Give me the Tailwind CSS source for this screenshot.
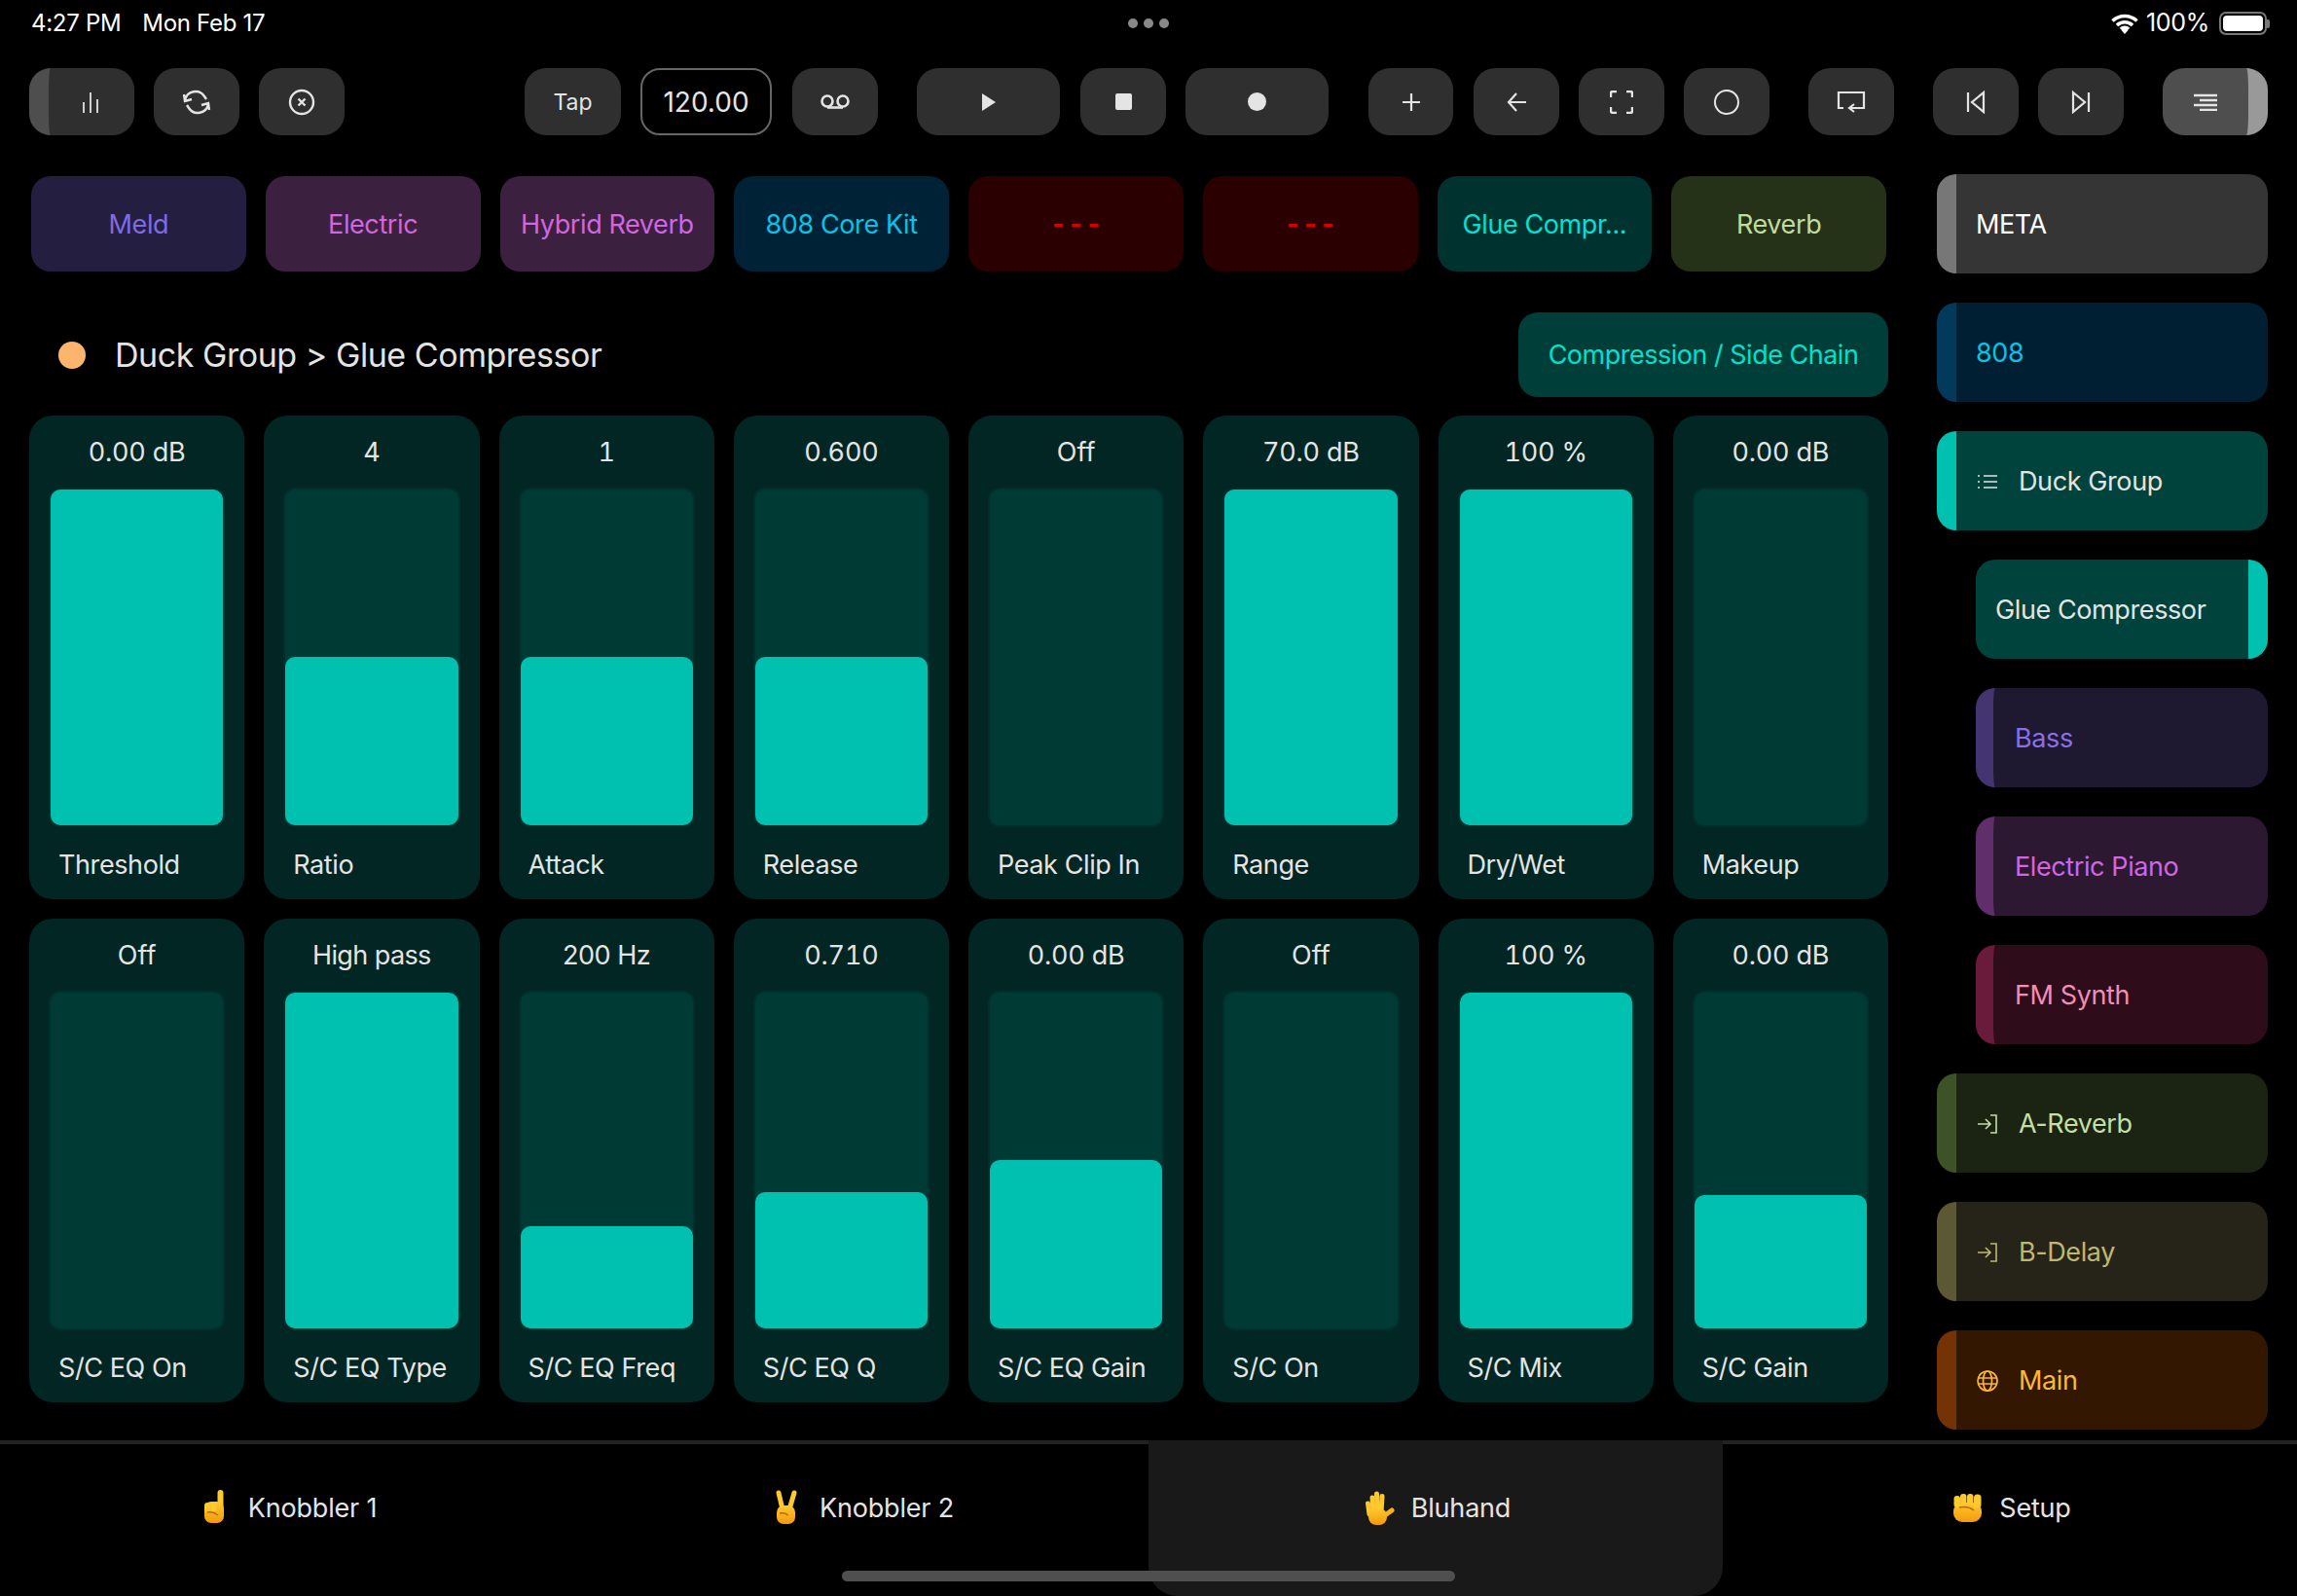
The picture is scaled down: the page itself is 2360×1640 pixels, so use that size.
<!DOCTYPE html>
<html lang="en">
<head>
    <meta charset="UTF-8">
    <title>Bluhand</title>
    <script src="https://cdn.jsdelivr.net/npm/@tailwindcss/browser@4"></script>
</head>
<body class="bg-black w-[2360px] h-[1640px] overflow-hidden relative font-['Inter',sans-serif] text-[#e4e4e4]">

    <!-- status bar -->
    <div class="h-[48px] flex items-center justify-between pl-[32px] pr-[28px] text-white text-[24px] tracking-[-0.3px]">
        <div class="flex gap-[22px]"><span>4:27 PM</span><span>Mon Feb 17</span></div>
        <div class="flex items-center gap-[8px]">
            <svg width="28" height="21" viewBox="0 0 28 21" fill="none" stroke="white" stroke-width="3.6"><path d="M1.5 7.5a18 18 0 0 1 25 0M6 12a11.5 11.5 0 0 1 16 0M10 16a5.5 5.5 0 0 1 8 0"/><path d="M14 21l-3.5-4a5 5 0 0 1 7 0z" fill="white" stroke="none"/></svg>
            <span class="text-[25px]">100%</span>
            <div class="ml-[2px] flex items-center">
                <div class="w-[49px] h-[24px] rounded-[7px] border-2 border-[#777] p-[2px]"><div class="w-full h-full bg-white rounded-[4px]"></div></div>
                <div class="w-[3px] h-[9px] rounded-r-[2px] bg-[#777]"></div>
            </div>
        </div>
    </div>
    <div class="absolute left-[1159px] top-[19px] flex gap-[6px]">
        <div class="w-[10px] h-[10px] rounded-full bg-[#888]"></div>
        <div class="w-[10px] h-[10px] rounded-full bg-[#888]"></div>
        <div class="w-[10px] h-[10px] rounded-full bg-[#888]"></div>
    </div>

    <!-- toolbar -->
    <div class="mt-[22px] h-[69px] pl-[30px] flex text-[#e4e4e4]">
        <div class="w-[108px] bg-[#2f2f2f] rounded-[22px] overflow-hidden flex items-center border-l-[20px] border-[#4e4e4e]">
            <svg class="ml-[33px]" width="20" height="24" viewBox="0 0 20 24" stroke="#e4e4e4" stroke-width="1.8"><path d="M3 12v11M10 2v21M17 9v14"/></svg>
        </div>
        <div class="ml-[20px] w-[88px] bg-[#2f2f2f] rounded-[22px] flex items-center justify-center">
            <svg width="30" height="28" viewBox="0 0 30 28" fill="none" stroke="#e4e4e4" stroke-width="2.4"><path d="M3 12a11 11 0 0 1 20-4l2 3M27 16a11 11 0 0 1-20 4l-2-3M2 6l1 7 7-2M28 22l-1-7-7 2"/></svg>
        </div>
        <div class="ml-[20px] w-[88px] bg-[#2f2f2f] rounded-[22px] flex items-center justify-center">
            <svg width="28" height="28" viewBox="0 0 28 28" fill="none" stroke="#e4e4e4" stroke-width="2.4"><circle cx="14" cy="14" r="12"/><path d="M10.5 10.5l7 7M17.5 10.5l-7 7"/></svg>
        </div>
        <div class="ml-[185px] w-[99px] bg-[#2f2f2f] rounded-[22px] flex items-center justify-center text-[23px] pt-[1px]">Tap</div>
        <div class="ml-[20px] w-[135px] bg-black rounded-[20px] border-2 border-[#666] flex items-center justify-center text-[28px]">120.00</div>
        <div class="ml-[21px] w-[88px] bg-[#2f2f2f] rounded-[22px] flex items-center justify-center">
            <svg width="30" height="16" viewBox="0 0 30 16" fill="none" stroke="#e4e4e4" stroke-width="2.6"><circle cx="7" cy="7" r="5.5"/><circle cx="23" cy="7" r="5.5"/><path d="M7 13.5h16"/></svg>
        </div>
        <div class="ml-[40px] w-[147px] bg-[#2f2f2f] rounded-[22px] flex items-center justify-center">
            <svg width="14" height="18" viewBox="0 0 14 18" fill="#e4e4e4"><path d="M0 0l14 9L0 18z"/></svg>
        </div>
        <div class="ml-[21px] w-[88px] bg-[#2f2f2f] rounded-[22px] flex items-center justify-center">
            <div class="w-[17px] h-[17px] bg-[#e4e4e4] rounded-[2px]"></div>
        </div>
        <div class="ml-[20px] w-[147px] bg-[#2f2f2f] rounded-[22px] flex items-center justify-center">
            <div class="w-[19px] h-[19px] bg-[#e4e4e4] rounded-full"></div>
        </div>
        <div class="ml-[41px] w-[87px] bg-[#2f2f2f] rounded-[22px] flex items-center justify-center">
            <svg width="20" height="20" viewBox="0 0 20 20" stroke="#e4e4e4" stroke-width="2.2"><path d="M10 1v18M1 10h18"/></svg>
        </div>
        <div class="ml-[21px] w-[88px] bg-[#2f2f2f] rounded-[22px] flex items-center justify-center">
            <svg width="20" height="20" viewBox="0 0 20 20" fill="none" stroke="#e4e4e4" stroke-width="2.2"><path d="M10 1l-8 9 8 9M2 10h18"/></svg>
        </div>
        <div class="ml-[20px] w-[88px] bg-[#2f2f2f] rounded-[22px] flex items-center justify-center">
            <svg width="24" height="24" viewBox="0 0 24 24" fill="none" stroke="#e4e4e4" stroke-width="2.4"><path d="M1 7V3a2 2 0 0 1 2-2h4M17 1h4a2 2 0 0 1 2 2v4M23 17v4a2 2 0 0 1-2 2h-4M7 23H3a2 2 0 0 1-2-2v-4"/></svg>
        </div>
        <div class="ml-[20px] w-[88px] bg-[#2f2f2f] rounded-[22px] flex items-center justify-center">
            <div class="w-[26px] h-[26px] rounded-full border-[2.4px] border-[#e4e4e4]"></div>
        </div>
        <div class="ml-[40px] w-[88px] bg-[#2f2f2f] rounded-[22px] flex items-center justify-center">
            <svg width="30" height="24" viewBox="0 0 30 24" fill="none" stroke="#e4e4e4" stroke-width="2.2"><path d="M7 18H2V2h26v16H14M18 14l-5 4 5 4M13 18h7"/></svg>
        </div>
        <div class="ml-[40px] w-[88px] bg-[#2f2f2f] rounded-[22px] flex items-center justify-center">
            <svg width="20" height="24" viewBox="0 0 20 24" fill="none" stroke="#e4e4e4" stroke-width="2.2"><path d="M2 2v20M18 2L6 12l12 10z"/></svg>
        </div>
        <div class="ml-[20px] w-[88px] bg-[#2f2f2f] rounded-[22px] flex items-center justify-center">
            <svg width="20" height="24" viewBox="0 0 20 24" fill="none" stroke="#e4e4e4" stroke-width="2.2"><path d="M18 2v20M2 2l12 10L2 22z"/></svg>
        </div>
        <div class="ml-[40px] w-[108px] bg-[#4e4e4e] rounded-[22px] overflow-hidden flex items-center border-r-[20px] border-[#999]">
            <svg class="ml-[32px]" width="24" height="18" viewBox="0 0 24 18" stroke="#e4e4e4" stroke-width="2.4"><path d="M0 2h24M6 7h18M0 12h24M6 17h18"/></svg>
        </div>
    </div>

    <div class="flex mt-[40px] pl-[30px]">
        <!-- main panel -->
        <div class="w-[1910px]">
            <div class="grid grid-cols-8 gap-x-[20px] mt-[2px] px-[2px] text-[27px] tracking-[-0.4px]">
                <div class="h-[98px] pt-[2px] rounded-[20px] bg-[#241f40] text-[#7f6be6] flex items-center justify-center">Meld</div>
                <div class="h-[98px] pt-[2px] rounded-[20px] bg-[#3c203f] text-[#d265e0] flex items-center justify-center">Electric</div>
                <div class="h-[98px] pt-[2px] rounded-[20px] bg-[#3c203f] text-[#d265e0] flex items-center justify-center">Hybrid Reverb</div>
                <div class="h-[98px] pt-[2px] rounded-[20px] bg-[#002236] text-[#08c3e6] flex items-center justify-center">808 Core Kit</div>
                <div class="h-[98px] pt-[2px] rounded-[20px] bg-[#2a0000] text-[#d40000] font-bold flex items-center justify-center">- - -</div>
                <div class="h-[98px] pt-[2px] rounded-[20px] bg-[#2a0000] text-[#d40000] font-bold flex items-center justify-center">- - -</div>
                <div class="h-[98px] pt-[2px] rounded-[20px] bg-[#003230] text-[#00e0d4] flex items-center justify-center">Glue Compr...</div>
                <div class="h-[98px] pt-[2px] rounded-[20px] bg-[#263217] text-[#c0dc9c] flex items-center justify-center">Reverb</div>
            </div>

            <div class="mt-[42px] h-[87px] flex items-center justify-between">
                <div class="flex items-center pl-[30px] gap-[30px] text-[34px] tracking-[-0.45px]">
                    <div class="w-[28px] h-[28px] rounded-full bg-[#fdb56e]"></div>
                    <span>Duck Group &gt; Glue Compressor</span>
                </div>
                <div class="w-[380px] h-[87px] pt-[2px] rounded-[20px] bg-[#003e39] text-[#00e0cd] flex items-center justify-center text-[27px] tracking-[-0.5px]">Compression / Side Chain</div>
            </div>

            <!-- parameter sliders -->
            <div class="grid grid-cols-8 gap-[20px] mt-[19px] text-[27px]">
                <div class="h-[497px] rounded-[24px] bg-[#012623] px-[20px] flex flex-col">
                    <div class="h-[74px] pt-[2px] flex items-center justify-center tabular-nums tracking-[-0.2px]">0.00 dB</div>
                    <div class="h-[349px] rounded-[12px] border-2 border-[#012f2b] bg-[#003a35] flex flex-col justify-end"><div class="h-full rounded-[10px] bg-[#00c1b0]"></div></div>
                    <div class="flex-1 flex items-center pl-[10px] pt-[5px] tracking-[-0.4px]">Threshold</div>
                </div>
                <div class="h-[497px] rounded-[24px] bg-[#012623] px-[20px] flex flex-col">
                    <div class="h-[74px] pt-[2px] flex items-center justify-center tabular-nums tracking-[-0.2px]">4</div>
                    <div class="h-[349px] rounded-[12px] border-2 border-[#012f2b] bg-[#003a35] flex flex-col justify-end"><div class="h-[173px] rounded-[10px] bg-[#00c1b0]"></div></div>
                    <div class="flex-1 flex items-center pl-[10px] pt-[5px] tracking-[-0.4px]">Ratio</div>
                </div>
                <div class="h-[497px] rounded-[24px] bg-[#012623] px-[20px] flex flex-col">
                    <div class="h-[74px] pt-[2px] flex items-center justify-center tabular-nums tracking-[-0.2px]">1</div>
                    <div class="h-[349px] rounded-[12px] border-2 border-[#012f2b] bg-[#003a35] flex flex-col justify-end"><div class="h-[173px] rounded-[10px] bg-[#00c1b0]"></div></div>
                    <div class="flex-1 flex items-center pl-[10px] pt-[5px] tracking-[-0.4px]">Attack</div>
                </div>
                <div class="h-[497px] rounded-[24px] bg-[#012623] px-[20px] flex flex-col">
                    <div class="h-[74px] pt-[2px] flex items-center justify-center tabular-nums tracking-[-0.2px]">0.600</div>
                    <div class="h-[349px] rounded-[12px] border-2 border-[#012f2b] bg-[#003a35] flex flex-col justify-end"><div class="h-[173px] rounded-[10px] bg-[#00c1b0]"></div></div>
                    <div class="flex-1 flex items-center pl-[10px] pt-[5px] tracking-[-0.4px]">Release</div>
                </div>
                <div class="h-[497px] rounded-[24px] bg-[#012623] px-[20px] flex flex-col">
                    <div class="h-[74px] pt-[2px] flex items-center justify-center">Off</div>
                    <div class="h-[349px] rounded-[12px] border-2 border-[#012f2b] bg-[#003a35]"></div>
                    <div class="flex-1 flex items-center pl-[10px] pt-[5px] tracking-[-0.4px]">Peak Clip In</div>
                </div>
                <div class="h-[497px] rounded-[24px] bg-[#012623] px-[20px] flex flex-col">
                    <div class="h-[74px] pt-[2px] flex items-center justify-center tabular-nums tracking-[-0.2px]">70.0 dB</div>
                    <div class="h-[349px] rounded-[12px] border-2 border-[#012f2b] bg-[#003a35] flex flex-col justify-end"><div class="h-full rounded-[10px] bg-[#00c1b0]"></div></div>
                    <div class="flex-1 flex items-center pl-[10px] pt-[5px] tracking-[-0.4px]">Range</div>
                </div>
                <div class="h-[497px] rounded-[24px] bg-[#012623] px-[20px] flex flex-col">
                    <div class="h-[74px] pt-[2px] flex items-center justify-center tabular-nums tracking-[-0.2px]">100 %</div>
                    <div class="h-[349px] rounded-[12px] border-2 border-[#012f2b] bg-[#003a35] flex flex-col justify-end"><div class="h-full rounded-[10px] bg-[#00c1b0]"></div></div>
                    <div class="flex-1 flex items-center pl-[10px] pt-[5px] tracking-[-0.4px]">Dry/Wet</div>
                </div>
                <div class="h-[497px] rounded-[24px] bg-[#012623] px-[20px] flex flex-col">
                    <div class="h-[74px] pt-[2px] flex items-center justify-center tabular-nums tracking-[-0.2px]">0.00 dB</div>
                    <div class="h-[349px] rounded-[12px] border-2 border-[#012f2b] bg-[#003a35]"></div>
                    <div class="flex-1 flex items-center pl-[10px] pt-[5px] tracking-[-0.4px]">Makeup</div>
                </div>

                <div class="h-[497px] rounded-[24px] bg-[#012623] px-[20px] flex flex-col">
                    <div class="h-[74px] pt-[2px] flex items-center justify-center">Off</div>
                    <div class="h-[349px] rounded-[12px] border-2 border-[#012f2b] bg-[#003a35]"></div>
                    <div class="flex-1 flex items-center pl-[10px] pt-[5px] tracking-[-0.4px]">S/C EQ On</div>
                </div>
                <div class="h-[497px] rounded-[24px] bg-[#012623] px-[20px] flex flex-col">
                    <div class="h-[74px] pt-[2px] flex items-center justify-center tracking-[-0.6px]">High pass</div>
                    <div class="h-[349px] rounded-[12px] border-2 border-[#012f2b] bg-[#003a35] flex flex-col justify-end"><div class="h-full rounded-[10px] bg-[#00c1b0]"></div></div>
                    <div class="flex-1 flex items-center pl-[10px] pt-[5px] tracking-[-0.4px]">S/C EQ Type</div>
                </div>
                <div class="h-[497px] rounded-[24px] bg-[#012623] px-[20px] flex flex-col">
                    <div class="h-[74px] pt-[2px] flex items-center justify-center tracking-[-0.5px]">200 Hz</div>
                    <div class="h-[349px] rounded-[12px] border-2 border-[#012f2b] bg-[#003a35] flex flex-col justify-end"><div class="h-[105px] rounded-[10px] bg-[#00c1b0]"></div></div>
                    <div class="flex-1 flex items-center pl-[10px] pt-[5px] tracking-[-0.4px]">S/C EQ Freq</div>
                </div>
                <div class="h-[497px] rounded-[24px] bg-[#012623] px-[20px] flex flex-col">
                    <div class="h-[74px] pt-[2px] flex items-center justify-center tabular-nums tracking-[-0.2px]">0.710</div>
                    <div class="h-[349px] rounded-[12px] border-2 border-[#012f2b] bg-[#003a35] flex flex-col justify-end"><div class="h-[140px] rounded-[10px] bg-[#00c1b0]"></div></div>
                    <div class="flex-1 flex items-center pl-[10px] pt-[5px] tracking-[-0.4px]">S/C EQ Q</div>
                </div>
                <div class="h-[497px] rounded-[24px] bg-[#012623] px-[20px] flex flex-col">
                    <div class="h-[74px] pt-[2px] flex items-center justify-center tabular-nums tracking-[-0.2px]">0.00 dB</div>
                    <div class="h-[349px] rounded-[12px] border-2 border-[#012f2b] bg-[#003a35] flex flex-col justify-end"><div class="h-[173px] rounded-[10px] bg-[#00c1b0]"></div></div>
                    <div class="flex-1 flex items-center pl-[10px] pt-[5px] tracking-[-0.4px]">S/C EQ Gain</div>
                </div>
                <div class="h-[497px] rounded-[24px] bg-[#012623] px-[20px] flex flex-col">
                    <div class="h-[74px] pt-[2px] flex items-center justify-center">Off</div>
                    <div class="h-[349px] rounded-[12px] border-2 border-[#012f2b] bg-[#003a35]"></div>
                    <div class="flex-1 flex items-center pl-[10px] pt-[5px] tracking-[-0.4px]">S/C On</div>
                </div>
                <div class="h-[497px] rounded-[24px] bg-[#012623] px-[20px] flex flex-col">
                    <div class="h-[74px] pt-[2px] flex items-center justify-center tabular-nums tracking-[-0.2px]">100 %</div>
                    <div class="h-[349px] rounded-[12px] border-2 border-[#012f2b] bg-[#003a35] flex flex-col justify-end"><div class="h-full rounded-[10px] bg-[#00c1b0]"></div></div>
                    <div class="flex-1 flex items-center pl-[10px] pt-[5px] tracking-[-0.4px]">S/C Mix</div>
                </div>
                <div class="h-[497px] rounded-[24px] bg-[#012623] px-[20px] flex flex-col">
                    <div class="h-[74px] pt-[2px] flex items-center justify-center tabular-nums tracking-[-0.2px]">0.00 dB</div>
                    <div class="h-[349px] rounded-[12px] border-2 border-[#012f2b] bg-[#003a35] flex flex-col justify-end"><div class="h-[137px] rounded-[10px] bg-[#00c1b0]"></div></div>
                    <div class="flex-1 flex items-center pl-[10px] pt-[5px] tracking-[-0.4px]">S/C Gain</div>
                </div>
            </div>
        </div>

        <!-- device chain sidebar -->
        <div class="w-[340px] ml-[50px] flex flex-col gap-y-[30px] text-[27px] tracking-[-0.4px]">
            <div class="h-[102px] pt-[2px] rounded-[20px] overflow-hidden bg-[#353535] border-l-[20px] border-[#777] flex items-center pl-[20px] text-white">META</div>
            <div class="h-[102px] pt-[2px] rounded-[20px] overflow-hidden bg-[#001f33] border-l-[20px] border-[#033a5c] flex items-center pl-[20px] text-[#08c3e6]">808</div>
            <div class="h-[102px] pt-[2px] rounded-[20px] overflow-hidden bg-[#00433c] border-l-[20px] border-[#00c1b0] flex items-center pl-[22px] gap-[22px]">
                <svg width="20" height="16" viewBox="0 0 20 16" stroke="#e4e4e4" stroke-width="1.6"><path d="M6 2h14M6 8h14M6 14h14M0 2h2M0 8h2M0 14h2"/></svg>
                <span>Duck Group</span>
            </div>
            <div class="ml-[40px] h-[102px] pt-[2px] rounded-[20px] overflow-hidden bg-[#00433c] border-r-[20px] border-[#00c1b0] flex items-center pl-[20px]">Glue Compressor</div>
            <div class="ml-[40px] h-[102px] pt-[2px] rounded-[20px] overflow-hidden bg-[#1e1830] border-l-[18px] border-[#443471] flex items-center pl-[22px] text-[#8a6fe8]">Bass</div>
            <div class="ml-[40px] h-[102px] pt-[2px] rounded-[20px] overflow-hidden bg-[#2c1830] border-l-[18px] border-[#5f2e6b] flex items-center pl-[22px] text-[#d265e0]">Electric Piano</div>
            <div class="ml-[40px] h-[102px] pt-[2px] rounded-[20px] overflow-hidden bg-[#2e0c1a] border-l-[18px] border-[#6a1a3a] flex items-center pl-[22px] text-[#ef8fb6]">FM Synth</div>
            <div class="h-[102px] pt-[2px] rounded-[20px] overflow-hidden bg-[#1b2312] border-l-[20px] border-[#3d5226] flex items-center pl-[22px] gap-[22px] text-[#c4dfa6]">
                <svg width="20" height="20" viewBox="0 0 20 20" fill="none" stroke="#c4dfa6" stroke-width="1.6"><path d="M0 10h12M8 5l5 5-5 5M13 1h6v18h-6"/></svg>
                <span>A-Reverb</span>
            </div>
            <div class="h-[102px] pt-[2px] rounded-[20px] overflow-hidden bg-[#262418] border-l-[20px] border-[#5b5833] flex items-center pl-[22px] gap-[22px] text-[#bdb873]">
                <svg width="20" height="20" viewBox="0 0 20 20" fill="none" stroke="#bdb873" stroke-width="1.6"><path d="M0 10h12M8 5l5 5-5 5M13 1h6v18h-6"/></svg>
                <span>B-Delay</span>
            </div>
            <div class="h-[102px] pt-[2px] rounded-[20px] overflow-hidden bg-[#331700] border-l-[20px] border-[#733305] flex items-center pl-[21px] gap-[21px] text-[#fdb92d]">
                <svg width="22" height="22" viewBox="0 0 22 22" fill="none" stroke="#fdb92d" stroke-width="1.7"><circle cx="11" cy="11" r="10"/><ellipse cx="11" cy="11" rx="4.5" ry="10"/><path d="M1 8h20M1 14h20"/></svg>
                <span>Main</span>
            </div>
        </div>
    </div>

    <!-- bottom tabs -->
    <div class="absolute left-0 right-0 bottom-0 h-[160px] border-t-4 border-[#222] grid grid-cols-4 text-[27px]">
        <div class="flex items-center justify-center gap-[8px] pb-[24px]">
            <svg width="44" height="40" viewBox="0 0 44 40">
                <defs><linearGradient id="skin" x1="0" y1="0" x2="0" y2="1"><stop offset="0" stop-color="#fdc92f"/><stop offset="1" stop-color="#f59a0b"/></linearGradient></defs>
                <rect x="20.5" y="1" width="6" height="25" rx="3" fill="#fdc92f"/>
                <rect x="7" y="13" width="20" height="22" rx="7" fill="url(#skin)"/>
                <rect x="7" y="14" width="6" height="10" rx="3" fill="#fdc92f"/>
                <rect x="13.5" y="13" width="6" height="10" rx="3" fill="#fdc92f"/>
                <path d="M10 24q6-1 11 3" stroke="#b86a0a" stroke-width="1.4" fill="none"/>
            </svg>
            <span class="tracking-[-0.2px]">Knobbler 1</span>
        </div>
        <div class="flex items-center justify-center gap-[8px] pb-[24px]">
            <svg width="44" height="40" viewBox="0 0 44 40">
                <path d="M14 21L10 4" stroke="#fdc92f" stroke-width="5" stroke-linecap="round"/>
                <path d="M21 21L26 4" stroke="#fdc92f" stroke-width="5" stroke-linecap="round"/>
                <rect x="8" y="17" width="19" height="19" rx="7" fill="url(#skin)"/>
                <path d="M11 25q5-1 9 2" stroke="#b86a0a" stroke-width="1.4" fill="none"/>
            </svg>
            <span class="tracking-[-0.2px]">Knobbler 2</span>
        </div>
        <div class="relative bg-[#191919] rounded-b-[30px] -mt-[4px] flex items-center justify-center gap-[8px] pb-[20px]">
            <svg width="44" height="40" viewBox="0 0 44 40">
                <path d="M7.5 15L9 26" stroke="#fdc92f" stroke-width="5" stroke-linecap="round"/>
                <path d="M12 9L13 24" stroke="#fdc92f" stroke-width="5" stroke-linecap="round"/>
                <path d="M16.5 5L17 24" stroke="#fdc92f" stroke-width="5" stroke-linecap="round"/>
                <path d="M22 7.5L21 24" stroke="#fdc92f" stroke-width="5" stroke-linecap="round"/>
                <path d="M25 27L32 22" stroke="#f8b21c" stroke-width="5" stroke-linecap="round"/>
                <rect x="8" y="20" width="19" height="17" rx="8" fill="url(#skin)"/>
            </svg>
            <span class="tracking-[-0.2px]">Bluhand</span>
        </div>
        <div class="flex items-center justify-center gap-[8px] pb-[24px]">
            <svg width="44" height="40" viewBox="0 0 44 40">
                <rect x="5" y="14" width="29" height="20" rx="9" fill="url(#skin)"/>
                <rect x="5.5" y="7" width="6.5" height="12" rx="3" fill="#fdc92f"/>
                <rect x="12" y="5" width="6.5" height="12" rx="3" fill="#fdc92f"/>
                <rect x="19" y="5" width="6.5" height="12" rx="3" fill="#fdc92f"/>
                <rect x="26" y="5.5" width="7.5" height="14" rx="3.5" fill="#fdc92f"/>
                <path d="M11 19q9-2 15 3" stroke="#b86a0a" stroke-width="1.4" fill="none"/>
            </svg>
            <span class="tracking-[-0.2px]">Setup</span>
        </div>
    </div>
    <div class="absolute left-[865px] top-[1614px] w-[630px] h-[11px] rounded-full bg-[#4f4f4f]"></div>
</body>
</html>
